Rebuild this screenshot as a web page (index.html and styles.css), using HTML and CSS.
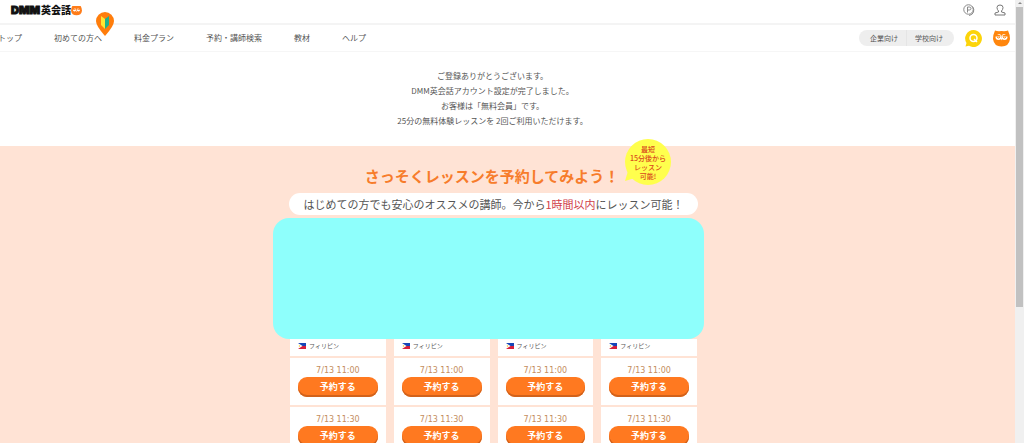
FILE: index.html
```html
<!DOCTYPE html>
<html lang="ja">
<head>
<meta charset="utf-8">
<title>DMM英会話</title>
<link rel="stylesheet" href="styles.css">
</head>
<body>
<div class="window">
  <div class="page">
    <header class="topbar">
      <a class="logo" href="#"><span class="logo-dmm">DMM</span><span class="logo-name">英会話</span>
        <svg class="logo-owl" viewBox="0 0 34 34" aria-hidden="true"><path fill="#ff7d1a" d="M4 3h26q4 7 4 15q-2 14-17 14T0 18Q0 10 4 3z"/><circle cx="11" cy="15" r="5" fill="#fff"/><circle cx="23" cy="15" r="5" fill="#fff"/><path fill="#ff7d1a" d="M5 8l9 4v3H5zM29 8l-9 4v3h9z"/><path fill="#fff" d="M15 18h4l-2 4z"/></svg>
      </a>
      <div class="account">
        <a href="#" aria-label="ポイント"><svg width="12" height="12" viewBox="0 0 24 24" fill="none" stroke="#888" stroke-width="2"><circle cx="11" cy="11" r="9.5"/><path d="M9 17V6h3.500q3.500 0 3.500 3t-3.500 3H9M19 5q4 5 2 11t-9 7"/></svg></a>
        <a href="#" aria-label="マイページ"><svg width="12" height="12" viewBox="0 0 24 24" fill="none" stroke="#777" stroke-width="2"><path d="M9 14Q6 11 6 7q0-5 6-5t6 5q0 4-3 7v2l7 2v4H2v-4l7-2z"/></svg></a>
      </div>
    </header>
    <div class="navbar">
      <nav class="menu">
        <a href="#">トップ</a>
        <a class="beginner" href="#">初めての方へ<svg class="pin" viewBox="0 0 18 24" aria-hidden="true"><path fill="#ff7d0c" d="M9 24Q0 14 0 9a9 9 0 0 1 18 0Q18 14 9 24z"/><path fill="#ffe632" d="M5 4l4 3v10l-4-4z"/><path fill="#20b08d" d="M13 4L9 7v10l4-4z"/></svg></a>
        <a href="#">料金プラン</a>
        <a href="#">予約・講師検索</a>
        <a href="#">教材</a>
        <a href="#">ヘルプ</a>
      </nav>
      <div class="nav-right">
        <div class="audience"><a href="#">企業向け</a><a href="#">学校向け</a></div>
        <a class="round" href="#" aria-label="Q&amp;A"><svg width="17" height="17" viewBox="0 0 34 34"><path fill="#fcd40a" d="M17 0a17 17 0 1 1-9 31.500L1 33l2-7A17 17 0 0 1 17 0z"/><circle cx="17" cy="16" r="7" fill="none" stroke="#fff" stroke-width="3"/><path stroke="#fff" stroke-width="3" d="M18 18l6 6"/></svg></a>
        <a class="round" href="#" aria-label="英会話"><svg width="17" height="17" viewBox="0 0 34 34"><path fill="#ff860d" d="M4 1q5 2 13 1q8 1 13-1q4 8 4 17q-2 15-17 15T0 18Q0 9 4 1z"/><circle cx="11" cy="14" r="6" fill="#fff"/><circle cx="23" cy="14" r="6" fill="#fff"/><path fill="#ff860d" d="M3 6l12 5v2H3zM31 6l-12 5v2h12z"/><path fill="none" stroke="#ff860d" stroke-width="2" d="M8 14q3 4 6 0M20 14q3 4 6 0"/><path fill="#fff" d="M15 16h4l-2 5z"/></svg></a>
      </div>
    </div>
    <main>
      <section class="message">
        <p>ご登録ありがとうございます。</p>
        <p>DMM英会話アカウント設定が完了しました。</p>
        <p>お客様は「無料会員」です。</p>
        <p>25分の無料体験レッスンを 2回ご利用いただけます。</p>
      </section>
      <section class="booking">
        <div class="booking-inner">
          <h1>さっそくレッスンを予約してみよう！</h1>
          <div class="badge"><svg class="badge-tail" viewBox="0 0 10 10" aria-hidden="true"><path fill="#ffff4d" d="M3 0L0 10L10 7z"/></svg><span>最短</span><span>15分後から</span><span>レッスン</span><span>可能!</span></div>
          <p class="lead">はじめての方でも安心のオススメの講師。今から<em>1時間以内</em>にレッスン可能！</p>
          <div class="cover"></div>
          <div class="teachers" id="teachers"></div>
        </div>
      </section>
    </main>
  </div>
  <div class="scrollbar" aria-hidden="true"><span class="arrow"></span><span class="thumb"></span></div>
</div>
<template id="teacher">
  <article class="teacher">
    <div class="country"><svg width="8" height="6" viewBox="0 0 16 12"><path fill="#1746b8" d="M0 0h16v6H0z"/><path fill="#d6203c" d="M0 6h16v6H0z"/><path fill="#fff" d="M0 0l9 6l-9 6z"/><circle cx="3" cy="6" r="1.500" fill="#f6c92c"/></svg>フィリピン</div>
    <div class="slot"><time>7/13 11:00</time><button type="button">予約する</button></div>
    <div class="slot"><time>7/13 11:30</time><button type="button">予約する</button></div>
  </article>
</template>
<script src="script.js"></script>
</body>
</html>
```
FILE: styles.css
```css
* { box-sizing: border-box; }
body {
  margin: 0;
  background: #fff;
  color: #555;
  font-family: "Noto Sans CJK JP", sans-serif;
  font-size: 8px;
}
a { color: inherit; text-decoration: none; }
p, h1 { margin: 0; }
svg { display: block; }

.window { display: flex; height: 100vh; overflow: hidden; }
.page { flex: 1; min-width: 0; overflow: hidden; }

.topbar {
  display: flex;
  align-items: center;
  justify-content: space-between;
  height: 25px;
  padding: 0 9px 3px 11px;
  border-bottom: 2px solid #f4f4f4;
}
.logo { display: flex; align-items: center; color: #111; line-height: 12px; }
.logo-dmm { font: 900 11px/12px Inter, sans-serif; -webkit-text-stroke: 1px #111; }
.logo-name { padding-left: 1px; font-size: 10px; font-weight: 900; }
.logo-owl { width: 11px; height: 11px; }
.account { display: flex; gap: 19px; }

.navbar {
  display: flex;
  align-items: center;
  justify-content: space-between;
  height: 27px;
  padding-right: 5px;
  border-bottom: 1px solid #f6f6f6;
}
.menu { display: flex; gap: 32px; margin-left: -2px; line-height: 12px; white-space: nowrap; }
.beginner { position: relative; }
.pin { position: absolute; right: -12px; bottom: 8px; width: 18px; height: 24px; }
.nav-right { display: flex; align-items: center; gap: 11px; }
.audience {
  display: flex;
  padding: 0 1px;
  border-radius: 8px;
  background: #eee;
  font-size: 7px;
  line-height: 16px;
}
.audience a { padding: 0 8px 0 10px; }
.audience a + a { padding: 0 10px 0 8px; border-left: 1px solid #e5e5e5; }

.message { padding: 16px 30px 18px 0; text-align: center; line-height: 15px; }

.booking { padding: 18px 38px 0 0; background: #ffe3d5; }
.booking-inner { position: relative; width: 431px; max-width: 100%; margin: 0 auto; }
.booking h1 {
  padding-left: 7px;
  color: #f77c2b;
  font-size: 15px;
  font-weight: 700;
  line-height: 24px;
  text-align: center;
}
.badge {
  position: absolute;
  top: -25px;
  right: 33px;
  display: flex;
  flex-direction: column;
  align-items: center;
  justify-content: center;
  width: 46px;
  height: 46px;
  padding-top: 2px;
  border-radius: 50%;
  background: #ffff4d;
  color: #d9481c;
  font-size: 7px;
  font-weight: 500;
  line-height: 9px;
}
.badge-tail { position: absolute; left: 0; bottom: 4px; width: 10px; height: 10px; }
.lead {
  margin: 5px 6px 3px 16px;
  border-radius: 11px;
  background: #fff;
  font-size: 11px;
  line-height: 22px;
  text-align: center;
}
.lead em { color: #d0404a; font-style: normal; }
.cover { height: 121px; border-radius: 16px; background: #8efffc; }
.teachers {
  display: grid;
  grid-template-columns: repeat(4, 1fr);
  gap: 8px;
  padding: 0 7px 0 17px;
}
.teacher { display: flex; flex-direction: column; gap: 2px; }
.country {
  display: flex;
  align-items: center;
  gap: 3px;
  height: 17px;
  padding: 0 8px 4px;
  background: #fff;
  font-size: 6px;
}
.slot {
  display: flex;
  flex-direction: column;
  padding: 7px 8px 8px;
  background: #fff;
  text-align: center;
}
.slot time { color: #c48d5d; font: 8px/12px "DejaVu Sans", sans-serif; }
.slot button {
  height: 20px;
  padding: 0;
  border: 0;
  border-radius: 9px;
  background: #ff7920;
  box-shadow: inset 0 -2px #d2621b;
  color: #fff;
  font: 700 9px/18px "Noto Sans CJK JP", sans-serif;
}

.scrollbar {
  display: flex;
  flex-direction: column;
  align-items: center;
  gap: 3px;
  width: 9px;
  padding-top: 2px;
  background: #f0f0f0;
}
.arrow { border: 2px solid transparent; border-top: 0; border-bottom-color: #888; }
.thumb { width: 7px; height: 68%; background: #c1c1c1; }
```
FILE: script.js
```js
const list = document.getElementById("teachers");
const card = document.getElementById("teacher");
for (let i = 0; i < 4; i++) {
  list.append(card.content.cloneNode(true));
}
```
